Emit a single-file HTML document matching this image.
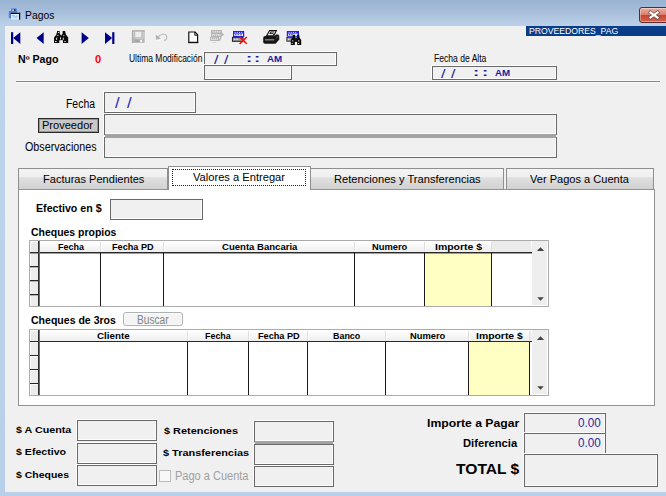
<!DOCTYPE html>
<html lang="es">
<head>
<meta charset="utf-8">
<title>Pagos</title>
<style>
html,body{margin:0;padding:0;}
body{width:666px;height:496px;overflow:hidden;position:relative;font-family:"Liberation Sans",sans-serif;background:#bfd4ed;}
#frame{position:absolute;left:0;top:0;width:666px;height:496px;background:linear-gradient(to bottom,#99b3d2 0px,#a3bbd8 9px,#b1c7e1 18px,#bdd1e9 26px,#bdd2eb 60px,#b9d0ea 496px);}
#client{position:absolute;left:5px;top:26px;width:661px;height:466px;background:#f0f0f0;}
.abs,.t,.box,.ln{position:absolute;}
.t{white-space:pre;line-height:1;transform-origin:0 0;display:block;}
.box{box-sizing:border-box;border:1px solid #696969;background:#f0f0f0;box-shadow:-1px -1px 0 #fdfdfd,inset -1px -1px 0 #fdfdfd;}
.ln{background:#858585;height:1px;}
.tab{position:absolute;box-sizing:border-box;border:1px solid #8e8f8f;border-bottom:none;background:linear-gradient(to bottom,#f4f4f4 0%,#efefef 38%,#dfdfdf 44%,#d2d2d2 100%);}
.tabsel{background:#fff;}
.grid{position:absolute;background:#fff;overflow:hidden;}
.gframe{position:absolute;left:0;top:0;right:0;bottom:0;box-sizing:border-box;border:1px solid #ababab;}
.gh{position:absolute;top:1px;height:11px;background:linear-gradient(to bottom,#ffffff,#f6f6f6 55%,#ededed);}
.vl{position:absolute;width:1px;background:#1a1a1a;}
.hl{position:absolute;height:2px;background:#3c3c3c;}
.sel{position:absolute;left:1px;width:9px;box-sizing:border-box;background:#ececec;border-top:1px solid #fdfdfd;border-left:1px solid #fdfdfd;}
.sb{position:absolute;top:1px;bottom:2px;width:15px;background:#eeeeee;}
</style>
</head>
<body>
<div id="frame"></div>
<div id="client"></div>

<!-- title icon -->
<svg class="abs" style="left:7px;top:7px" width="16" height="15" viewBox="7 7 16 15">
 <rect x="11.6" y="9" width="4.6" height="2.6" fill="#9cc0f0" stroke="#4a78d8" stroke-width="1"/>
 <rect x="8.8" y="11" width="8.6" height="7.2" rx=".8" fill="#4f7fdc"/>
 <rect x="14" y="9.3" width="1.6" height="1.5" fill="#101018"/>
 <rect x="11" y="13" width="9" height="6.6" fill="#d2ecf8"/>
 <rect x="10.8" y="12.8" width="9.4" height="1.2" fill="#0c0c10"/>
 <rect x="19" y="12.8" width="1.2" height="6.9" fill="#0c0c10"/>
 <rect x="12.4" y="15.2" width="2" height="1" fill="#7aa6e0"/>
 <rect x="13.4" y="16.6" width="3" height="1" fill="#8db4e6"/>
 <rect x="16.2" y="15.4" width="1.4" height="2" fill="#9cc0ea"/>
</svg>

<!-- close button -->
<div class="abs" style="left:639px;top:7px;width:40px;height:16px;box-sizing:border-box;border:1px solid #5c2a36;border-radius:3px;background:linear-gradient(to bottom,#eab0a2 0%,#dc8270 46%,#c6452e 52%,#d4664a 100%);box-shadow:inset 0 0 0 1px rgba(255,255,255,.35);"></div>
<svg class="abs" style="left:647px;top:9px" width="14" height="12" viewBox="0 0 14 12">
 <path d="M3.4 3.4 L10.6 8.6 M10.6 3.4 L3.4 8.6" stroke="#6a4a50" stroke-width="3.4" stroke-linecap="square"/>
 <path d="M3.4 3.4 L10.6 8.6 M10.6 3.4 L3.4 8.6" stroke="#fff" stroke-width="2.1" stroke-linecap="square"/>
</svg>

<!-- banner -->
<div class="abs" style="left:526px;top:26px;width:140px;height:10px;background:#0a3d87;"></div>

<!-- toolbar icons -->
<svg class="abs" style="left:5px;top:26px" width="310" height="24" viewBox="5 26 310 24">
 <g fill="#00008b">
  <rect x="11" y="32.2" width="2.2" height="11.8"/>
  <path d="M20.3 32.2 L20.3 44 L13.2 38.1 Z"/>
  <path d="M43.7 32.2 L43.7 44 L36.5 38.1 Z"/>
  <path d="M81.6 32.2 L81.6 44 L88.8 38.1 Z"/>
  <path d="M105 32.2 L105 44 L112.2 38.1 Z"/>
  <rect x="112.2" y="32.2" width="2.2" height="11.8"/>
 </g>
 <!-- binoculars -->
 <g fill="#0a0a0a">
  <path d="M57.2 31 H59.7 V33.6 L60.9 35.4 V40.2 H59.3 V43.1 H54 V37.6 L56.4 34.6 Z"/>
  <path d="M65.1 31 H62.6 V33.6 L61.4 35.4 V40.2 H63 V43.1 H68.2 V37.6 L65.9 34.6 Z"/>
  <rect x="60.4" y="35.6" width="1.6" height="4.4"/>
 </g>
 <g fill="#f4f4f4">
  <rect x="57.9" y="32" width="1" height="1"/>
  <rect x="57.3" y="35" width="1.1" height="1"/>
  <rect x="56.2" y="37.6" width="0.9" height="2.3"/>
  <rect x="55" y="41" width="1.6" height="0.9"/>
  <rect x="60" y="37.4" width="0.9" height="2"/>
  <rect x="62.8" y="37.6" width="0.9" height="2.3"/>
  <rect x="63.3" y="35" width="1" height="0.9"/>
  <rect x="64.2" y="41" width="1.6" height="0.8"/>
 </g>
 <!-- save (disabled) -->
 <g>
  <rect x="132.4" y="30.8" width="12" height="11.8" fill="#b9b9b9" stroke="#a2a2a2" stroke-width=".9"/>
  <rect x="135" y="31.6" width="6.6" height="5.8" fill="#ececec" stroke="#c4c4c4" stroke-width=".5"/>
  <g fill="#e2e2e2"><rect x="133" y="32.2" width="1.2" height="1"/><rect x="133" y="34.2" width="1.2" height="1"/><rect x="133" y="36.2" width="1.2" height="1"/><rect x="142.6" y="32.2" width="1.2" height="1"/><rect x="142.6" y="34.2" width="1.2" height="1"/><rect x="142.6" y="36.2" width="1.2" height="1"/>
  <rect x="135.6" y="38.2" width="1" height=".9"/><rect x="137.4" y="38.2" width="1" height=".9"/><rect x="139.2" y="38.2" width="1" height=".9"/><rect x="141.6" y="38" width="1.4" height="1.1"/></g>
  <rect x="134.4" y="39.6" width="7.8" height="3" fill="#a6a6a6"/>
  <rect x="140" y="39.8" width="2" height="2.4" fill="#f6f6f6"/>
  <path d="M145 31.4 V43.2 H133" fill="none" stroke="#fafafa" stroke-width=".8"/>
 </g>
 <!-- undo (disabled) -->
 <path d="M158 37.4 C160 34 164.6 32.8 166.4 35.6 C167.8 38 166 40.2 164 40.6" fill="none" stroke="#bababa" stroke-width="1.1"/>
 <path d="M155.8 34.6 L155.9 39.8 L160.8 38.8 Z" fill="#b4b4b4"/>
 <path d="M156.6 40.6 L161.4 39.6" stroke="#fbfbfb" stroke-width=".8"/>
 <!-- new doc -->
 <path d="M188.8 32 H195.2 L197.6 34.8 V42.3 H188.8 Z" fill="#fdfdfd" stroke="#111" stroke-width="1.2" stroke-linejoin="miter"/>
 <path d="M188.2 42.7 H198.3" stroke="#111" stroke-width="1"/>
 <path d="M194.8 32 V35.2 H197.6" fill="none" stroke="#111" stroke-width="1"/>
 <!-- edit (disabled) -->
 <g fill="#e4e4e4" stroke="#a8a8a8" stroke-width=".8">
  <rect x="211.6" y="30.6" width="9.8" height="2.6" fill="#c6c6c6"/>
  <rect x="211.6" y="33.6" width="8.6" height="3"/>
  <rect x="210.6" y="37.2" width="8" height="3.2"/>
 </g>
 <g fill="#9c9c9c"><rect x="213" y="34.7" width="1.2" height=".9"/><rect x="215" y="34.7" width="1.2" height=".9"/><rect x="217" y="34.7" width="1.2" height=".9"/><rect x="212" y="38.4" width="1.2" height=".9"/><rect x="214" y="38.4" width="1.2" height=".9"/><rect x="216" y="38.4" width="1.2" height=".9"/>
 <rect x="212.6" y="31.4" width="1" height=".8" fill="#eee"/><rect x="214.8" y="31.4" width="1" height=".8" fill="#eee"/><rect x="217" y="31.4" width="1" height=".8" fill="#eee"/><rect x="219.2" y="31.4" width="1" height=".8" fill="#eee"/>
 <rect x="212.4" y="42" width="1.4" height=".8" fill="#c0c0c0"/><rect x="214.6" y="42" width="1.4" height=".8" fill="#c0c0c0"/></g>
 <path d="M221.4 32.2 L224.2 34.4 L221.8 36.2 L220.8 39.4 L219 41.6 L218.4 41 L220 37.6 L220.8 34.4 Z" fill="#b6b6b6"/>
 <!-- delete -->
 <rect x="233" y="31" width="11.2" height="6" fill="#2222ee"/>
 <rect x="234.2" y="33.6" width="8.8" height="2.4" fill="#f0f0ff"/>
 <g fill="#e8e8ff"><rect x="234.6" y="32" width="1" height=".9"/><rect x="236.8" y="32" width="1" height=".9"/><rect x="239" y="32" width="1" height=".9"/><rect x="241.2" y="32" width="1" height=".9"/></g>
 <g fill="#333"><rect x="235" y="34.3" width="1.6" height="1"/><rect x="237.6" y="34.3" width="1.6" height="1"/><rect x="240.2" y="34.3" width="1.6" height="1"/></g>
 <rect x="232.4" y="37.3" width="10.6" height="4" fill="#9a9a9a" stroke="#111" stroke-width=".9"/>
 <g fill="#f0f0f0"><rect x="233.8" y="38.8" width="1.6" height="1"/><rect x="236.4" y="38.8" width="1.6" height="1"/></g>
 <path d="M239.3 36.8 L246.8 43.8 M246.8 37 L239.6 44" stroke="#f00" stroke-width="1.5"/>
 <!-- printer -->
 <path d="M266.6 35.8 L269.6 30.6 H276.4 L273.8 35.8 Z" fill="#fafafa" stroke="#111" stroke-width="1.1"/>
 <path d="M270.6 32 H274.2 M269.6 33.6 H273.4 M270.8 32 L269.8 33.6 M274 33.6 L273.2 35" stroke="#111" stroke-width=".9" fill="none"/>
 <path d="M263.2 38 Q263.2 36 265.2 36 H274.4 L276 34.4 H278 Q279.4 34.6 279.3 36.4 V39.6 L275.8 43.4 Q275.4 43.8 274.6 43.8 H265 Q263.2 43.8 263.2 42 Z" fill="#161616"/>
 <path d="M265 39.8 H274.2" stroke="#8c8c8c" stroke-width="1.3"/>
 <path d="M276 38.4 L278.6 36" stroke="#6a6a6a" stroke-width=".8"/>
 <!-- grid + binoculars -->
 <rect x="286.8" y="31" width="12.2" height="5.8" fill="#2222ee"/>
 <rect x="288" y="33.6" width="9.6" height="2.2" fill="#f0f0ff"/>
 <g fill="#e8e8ff"><rect x="288.6" y="32" width="1" height=".9"/><rect x="290.8" y="32" width="1" height=".9"/><rect x="293" y="32" width="1" height=".9"/><rect x="295.2" y="32" width="1" height=".9"/></g>
 <g fill="#333"><rect x="288.8" y="34.2" width="1.6" height="1"/><rect x="291.2" y="34.2" width="1.4" height="1"/></g>
 <rect x="286.8" y="37.4" width="5.4" height="3.8" fill="#9a9a9a" stroke="#222" stroke-width=".8"/>
 <rect x="288" y="38.8" width="1.4" height="1" fill="#eee"/>
 <g fill="#0a0a0a">
  <path d="M292.8 34.8 H295 V36.8 L295.8 38 V42 H294.8 V44.9 H290.8 V40 L292.4 37.6 Z"/>
  <path d="M299.2 34.8 H297 V36.8 L296.2 38 V42 H297.2 V44.9 H301.2 V40 L299.6 37.6 Z"/>
  <rect x="295.4" y="38.2" width="1.4" height="3.4"/>
 </g>
 <g fill="#f0f0f0"><rect x="292.4" y="40" width=".8" height="1.6"/><rect x="291.6" y="43" width="1.2" height=".8"/><rect x="298.4" y="40" width=".8" height="1.6"/><rect x="298" y="43" width="1.2" height=".8"/></g>
</svg>

<!-- header separator lines -->
<div class="ln" style="left:16px;top:81px;width:644px;"></div>
<div class="abs" style="left:16px;top:82px;width:644px;height:1px;background:#fafafa;"></div>
<div class="abs" style="left:16px;top:80px;width:644px;height:1px;background:#f9f9f9;"></div>

<!-- top text boxes -->
<div class="box" style="left:204px;top:52px;width:133px;height:14px;"></div>
<div class="box" style="left:204px;top:65px;width:88px;height:15px;"></div>
<div class="box" style="left:432px;top:66px;width:125px;height:14px;"></div>

<div class="box" style="left:104px;top:92px;width:92px;height:21px;"></div>
<div class="box" style="left:104px;top:114px;width:453px;height:21px;"></div>
<div class="box" style="left:104px;top:137px;width:453px;height:21px;"></div>

<div class="abs" style="left:105px;top:134px;width:451px;height:4px;background:#a3a3a3;"></div>

<!-- Proveedor button -->
<div class="abs" style="left:38px;top:118px;width:61px;height:15px;box-sizing:border-box;border:1px solid #2a2a2a;background:#c8c8c8;box-shadow:inset 0 0 0 1px rgba(60,60,60,.35);"></div>

<!-- tab control -->
<div class="abs" style="left:18px;top:189px;width:637px;height:217px;box-sizing:border-box;border:1px solid #929296;background:#fff;"></div>
<div class="tab" style="left:18px;top:168px;width:150px;height:21px;"></div>
<div class="tab" style="left:310px;top:168px;width:194px;height:21px;"></div>
<div class="tab" style="left:506px;top:168px;width:148px;height:21px;"></div>
<div class="tab tabsel" style="left:168px;top:166px;width:143px;height:24px;"></div>
<div class="abs" style="left:172px;top:169px;width:134px;height:17px;box-sizing:border-box;border:1px dotted #222;"></div>

<!-- Efectivo box -->
<div class="box" style="left:110px;top:199px;width:93px;height:21px;"></div>

<!-- grid 1 -->
<div class="grid" style="left:29px;top:240px;width:520px;height:67px;">
 <div class="gh" style="left:1px;width:502px;"></div>
 <div class="abs" style="left:1px;top:1px;width:9px;height:11px;background:#e9e9e9;border-left:1px solid #fff;border-top:1px solid #fff;box-sizing:border-box;"></div>
 <div class="abs" style="left:71px;top:2px;width:1px;height:9px;background:#dedede;"></div>
 <div class="abs" style="left:72px;top:2px;width:1px;height:9px;background:#fff;"></div>
 <div class="abs" style="left:134px;top:2px;width:1px;height:9px;background:#dedede;"></div>
 <div class="abs" style="left:135px;top:2px;width:1px;height:9px;background:#fff;"></div>
 <div class="abs" style="left:325px;top:2px;width:1px;height:9px;background:#dedede;"></div>
 <div class="abs" style="left:326px;top:2px;width:1px;height:9px;background:#fff;"></div>
 <div class="abs" style="left:395px;top:2px;width:1px;height:9px;background:#dedede;"></div>
 <div class="abs" style="left:396px;top:2px;width:1px;height:9px;background:#fff;"></div>
 <div class="abs" style="left:462px;top:2px;width:1px;height:9px;background:#dedede;"></div>
 <div class="abs" style="left:463px;top:2px;width:1px;height:9px;background:#fff;"></div>
 <div class="abs" style="left:463px;top:1px;width:39px;height:11px;background:#ebebeb;"></div>
 <div class="abs" style="left:396px;top:13px;width:66px;height:53px;background:#ffffc4;"></div>
 <div class="sel" style="top:13px;height:13px;"></div>
 <div class="sel" style="top:27px;height:13px;"></div>
 <div class="sel" style="top:41px;height:13px;"></div>
 <div class="sel" style="top:55px;height:11px;"></div>
 <div class="abs" style="left:1px;top:26px;width:9px;height:1px;background:#262626;"></div>
 <div class="abs" style="left:1px;top:27px;width:9px;height:1px;background:#b4b4b4;"></div>
 <div class="abs" style="left:1px;top:40px;width:9px;height:1px;background:#262626;"></div>
 <div class="abs" style="left:1px;top:41px;width:9px;height:1px;background:#b4b4b4;"></div>
 <div class="abs" style="left:1px;top:54px;width:9px;height:1px;background:#262626;"></div>
 <div class="abs" style="left:1px;top:55px;width:9px;height:1px;background:#b4b4b4;"></div>
 <div class="abs" style="left:1px;top:12px;width:502px;height:1px;background:#2a2a2a;"></div>
 <div class="abs" style="left:1px;top:13px;width:502px;height:1px;background:#9e9e9e;"></div>
 <div class="abs" style="left:9px;top:1px;width:1px;height:65px;background:#2e2e2e;"></div>
 <div class="abs" style="left:10px;top:1px;width:1px;height:65px;background:#6e6e6e;"></div>
 <div class="vl" style="left:71px;top:13px;height:53px;"></div>
 <div class="vl" style="left:134px;top:13px;height:53px;"></div>
 <div class="vl" style="left:325px;top:13px;height:53px;"></div>
 <div class="vl" style="left:395px;top:13px;height:53px;"></div>
 <div class="vl" style="left:462px;top:13px;height:53px;"></div>
 <div class="sb" style="left:503px;"></div>
 <svg class="abs" style="left:507px;top:6px" width="9" height="6"><path d="M0.8 5 L4.5 1.2 L8.2 5 Z" fill="#444"/></svg>
 <svg class="abs" style="left:507px;top:56px" width="9" height="6"><path d="M1.2 1.2 L4.5 4.8 L7.8 1.2 Z" fill="#444"/></svg>
 <div class="gframe"></div>
</div>

<!-- Buscar button -->
<div class="abs" style="left:123px;top:312px;width:60px;height:14px;box-sizing:border-box;border:1px solid #adb2b5;border-radius:3px;background:#f4f4f4;box-shadow:inset 0 0 0 1px #fcfcfc;"></div>

<!-- grid 2 -->
<div class="grid" style="left:29px;top:329px;width:520px;height:67px;">
 <div class="gh" style="left:1px;width:502px;"></div>
 <div class="abs" style="left:1px;top:1px;width:9px;height:11px;background:#e9e9e9;border-left:1px solid #fff;border-top:1px solid #fff;box-sizing:border-box;"></div>
 <div class="abs" style="left:158px;top:2px;width:1px;height:9px;background:#dedede;"></div>
 <div class="abs" style="left:159px;top:2px;width:1px;height:9px;background:#fff;"></div>
 <div class="abs" style="left:219px;top:2px;width:1px;height:9px;background:#dedede;"></div>
 <div class="abs" style="left:220px;top:2px;width:1px;height:9px;background:#fff;"></div>
 <div class="abs" style="left:278px;top:2px;width:1px;height:9px;background:#dedede;"></div>
 <div class="abs" style="left:279px;top:2px;width:1px;height:9px;background:#fff;"></div>
 <div class="abs" style="left:356px;top:2px;width:1px;height:9px;background:#dedede;"></div>
 <div class="abs" style="left:357px;top:2px;width:1px;height:9px;background:#fff;"></div>
 <div class="abs" style="left:439px;top:2px;width:1px;height:9px;background:#dedede;"></div>
 <div class="abs" style="left:440px;top:2px;width:1px;height:9px;background:#fff;"></div>
 <div class="abs" style="left:500px;top:2px;width:1px;height:9px;background:#dedede;"></div>
 <div class="abs" style="left:501px;top:2px;width:1px;height:9px;background:#fff;"></div>
 <div class="abs" style="left:501px;top:1px;width:1px;height:11px;background:#ebebeb;"></div>
 <div class="abs" style="left:440px;top:13px;width:60px;height:53px;background:#ffffc4;"></div>
 <div class="sel" style="top:13px;height:13px;"></div>
 <div class="sel" style="top:27px;height:13px;"></div>
 <div class="sel" style="top:41px;height:13px;"></div>
 <div class="sel" style="top:55px;height:11px;"></div>
 <div class="abs" style="left:1px;top:26px;width:9px;height:1px;background:#262626;"></div>
 <div class="abs" style="left:1px;top:40px;width:9px;height:1px;background:#262626;"></div>
 <div class="abs" style="left:1px;top:54px;width:9px;height:1px;background:#262626;"></div>
 <div class="abs" style="left:1px;top:12px;width:502px;height:1px;background:#2a2a2a;"></div>
 <div class="abs" style="left:9px;top:1px;width:1px;height:65px;background:#2e2e2e;"></div>
 <div class="abs" style="left:10px;top:1px;width:1px;height:65px;background:#6e6e6e;"></div>
 <div class="vl" style="left:158px;top:13px;height:53px;"></div>
 <div class="vl" style="left:219px;top:13px;height:53px;"></div>
 <div class="vl" style="left:278px;top:13px;height:53px;"></div>
 <div class="vl" style="left:356px;top:13px;height:53px;"></div>
 <div class="vl" style="left:439px;top:13px;height:53px;"></div>
 <div class="vl" style="left:500px;top:13px;height:53px;"></div>
 <div class="sb" style="left:503px;"></div>
 <svg class="abs" style="left:507px;top:6px" width="9" height="6"><path d="M0.8 5 L4.5 1.2 L8.2 5 Z" fill="#444"/></svg>
 <svg class="abs" style="left:507px;top:56px" width="9" height="6"><path d="M1.2 1.2 L4.5 4.8 L7.8 1.2 Z" fill="#444"/></svg>
 <div class="gframe"></div>
</div>

<!-- bottom boxes -->
<div class="box" style="left:77px;top:420px;width:80px;height:21px;"></div>
<div class="box" style="left:77px;top:443px;width:80px;height:21px;"></div>
<div class="box" style="left:77px;top:465px;width:80px;height:21px;"></div>
<div class="box" style="left:254px;top:421px;width:80px;height:21px;"></div>
<div class="box" style="left:254px;top:444px;width:80px;height:21px;"></div>
<div class="abs" style="left:255px;top:441px;width:78px;height:3px;background:#a3a3a3;"></div>
<div class="box" style="left:254px;top:466px;width:80px;height:21px;"></div>
<div class="box" style="left:524px;top:413px;width:82px;height:21px;"></div>
<div class="box" style="left:524px;top:433px;width:82px;height:22px;"></div>
<div class="box" style="left:524px;top:454px;width:134px;height:33px;"></div>

<!-- checkbox -->
<div class="abs" style="left:159px;top:470px;width:12px;height:12px;box-sizing:border-box;border:1px solid #bcbcbc;background:#f8f8f8;"></div>

<span class="t" style="left:25.0px;top:9.00px;font-size:11.6px;font-weight:normal;color:#000;transform:scaleX(0.8913);">Pagos</span>
<span class="t" style="left:17.5px;top:55.00px;font-size:10px;font-weight:bold;color:#000;transform:scaleX(1.0627);">Nº Pago</span>
<span class="t" style="left:95.1px;top:55.00px;font-size:10px;font-weight:bold;color:#f00;transform:scaleX(1.1146);">0</span>
<span class="t" style="left:128.7px;top:54.00px;font-size:10.2px;font-weight:normal;color:#000;transform:scaleX(0.8310);">Ultima Modificación</span>
<span class="t" style="left:433.6px;top:54.00px;font-size:10.2px;font-weight:normal;color:#000;transform:scaleX(0.8409);">Fecha de Alta</span>
<span class="t" style="left:528.8px;top:27.00px;font-size:9.2px;font-weight:normal;color:#fff;transform:scaleX(0.9410);">PROVEEDORES_PAG</span>
<span class="t" style="left:213.7px;top:54.00px;font-size:12px;font-weight:normal;color:#1a1a9e;transform:scaleX(1.3458);">/</span>
<span class="t" style="left:224.0px;top:54.00px;font-size:12px;font-weight:normal;color:#1a1a9e;transform:scaleX(1.3159);">/</span>
<span class="t" style="left:246.0px;top:54.00px;font-size:10px;font-weight:bold;color:#1a1a9e;transform:scaleX(1.8542);">:</span>
<span class="t" style="left:254.4px;top:54.00px;font-size:10px;font-weight:bold;color:#1a1a9e;transform:scaleX(1.8542);">:</span>
<span class="t" style="left:267.2px;top:54.00px;font-size:9.4px;font-weight:bold;color:#1a1a9e;transform:scaleX(1.0415);">AM</span>
<span class="t" style="left:441.0px;top:68.00px;font-size:12px;font-weight:normal;color:#1a1a9e;transform:scaleX(1.3458);">/</span>
<span class="t" style="left:451.3px;top:68.00px;font-size:12px;font-weight:normal;color:#1a1a9e;transform:scaleX(1.3159);">/</span>
<span class="t" style="left:473.3px;top:68.00px;font-size:10px;font-weight:bold;color:#1a1a9e;transform:scaleX(1.8542);">:</span>
<span class="t" style="left:481.7px;top:68.00px;font-size:10px;font-weight:bold;color:#1a1a9e;transform:scaleX(1.8542);">:</span>
<span class="t" style="left:494.5px;top:68.00px;font-size:9.4px;font-weight:bold;color:#1a1a9e;transform:scaleX(1.0415);">AM</span>
<span class="t" style="left:66.0px;top:98.00px;font-size:12px;font-weight:normal;color:#000;transform:scaleX(0.8693);">Fecha</span>
<span class="t" style="left:114.7px;top:95.00px;font-size:15.4px;font-weight:normal;color:#1c1cc0;transform:scaleX(1.0745);">/</span>
<span class="t" style="left:126.7px;top:95.00px;font-size:15.4px;font-weight:normal;color:#1c1cc0;transform:scaleX(1.0745);">/</span>
<span class="t" style="left:42.0px;top:120.00px;font-size:11.4px;font-weight:normal;color:#000;transform:scaleX(0.9703);">Proveedor</span>
<span class="t" style="left:25.4px;top:141.00px;font-size:12px;font-weight:normal;color:#000;transform:scaleX(0.8945);">Observaciones</span>
<span class="t" style="left:42.6px;top:174.00px;font-size:11.3px;font-weight:normal;color:#000;transform:scaleX(0.9785);">Facturas Pendientes</span>
<span class="t" style="left:193.0px;top:172.00px;font-size:11.3px;font-weight:normal;color:#000;transform:scaleX(0.9854);">Valores a Entregar</span>
<span class="t" style="left:333.7px;top:174.00px;font-size:11.3px;font-weight:normal;color:#000;transform:scaleX(0.9857);">Retenciones y Transferencias</span>
<span class="t" style="left:530.0px;top:174.00px;font-size:11.3px;font-weight:normal;color:#000;transform:scaleX(0.9790);">Ver Pagos a Cuenta</span>
<span class="t" style="left:36.3px;top:204.00px;font-size:10px;font-weight:bold;color:#000;transform:scaleX(1.0632);">Efectivo en $</span>
<span class="t" style="left:30.7px;top:228.00px;font-size:10.3px;font-weight:bold;color:#000;transform:scaleX(1.0153);">Cheques propios</span>
<span class="t" style="left:30.9px;top:316.00px;font-size:10.3px;font-weight:bold;color:#000;transform:scaleX(1.0231);">Cheques de 3ros</span>
<span class="t" style="left:137.0px;top:314.00px;font-size:12px;font-weight:normal;color:#838383;transform:scaleX(0.8458);">Buscar</span>
<span class="t" style="left:57.6px;top:243.00px;font-size:8.7px;font-weight:bold;color:#000;transform:scaleX(1.0315);">Fecha</span>
<span class="t" style="left:112.0px;top:243.00px;font-size:8.7px;font-weight:bold;color:#000;transform:scaleX(1.0507);">Fecha PD</span>
<span class="t" style="left:221.6px;top:243.00px;font-size:8.7px;font-weight:bold;color:#000;transform:scaleX(1.0997);">Cuenta Bancaria</span>
<span class="t" style="left:371.7px;top:243.00px;font-size:8.7px;font-weight:bold;color:#000;transform:scaleX(1.0753);">Numero</span>
<span class="t" style="left:435.0px;top:243.00px;font-size:8.7px;font-weight:bold;color:#000;transform:scaleX(1.2018);">Importe $</span>
<span class="t" style="left:97.0px;top:332.00px;font-size:8.7px;font-weight:bold;color:#000;transform:scaleX(1.1254);">Cliente</span>
<span class="t" style="left:205.3px;top:332.00px;font-size:8.7px;font-weight:bold;color:#000;transform:scaleX(1.0235);">Fecha</span>
<span class="t" style="left:257.6px;top:332.00px;font-size:8.7px;font-weight:bold;color:#000;transform:scaleX(1.0532);">Fecha PD</span>
<span class="t" style="left:332.7px;top:332.00px;font-size:8.7px;font-weight:bold;color:#000;transform:scaleX(1.0278);">Banco</span>
<span class="t" style="left:409.5px;top:332.00px;font-size:8.7px;font-weight:bold;color:#000;transform:scaleX(1.0723);">Numero</span>
<span class="t" style="left:475.8px;top:332.00px;font-size:8.7px;font-weight:bold;color:#000;transform:scaleX(1.1966);">Importe $</span>
<span class="t" style="left:16.0px;top:425.00px;font-size:9.9px;font-weight:bold;color:#000;transform:scaleX(1.0873);">$ A Cuenta</span>
<span class="t" style="left:16.0px;top:447.00px;font-size:9.9px;font-weight:bold;color:#000;transform:scaleX(1.0717);">$ Efectivo</span>
<span class="t" style="left:16.0px;top:470.00px;font-size:9.9px;font-weight:bold;color:#000;transform:scaleX(1.0610);">$ Cheques</span>
<span class="t" style="left:164.0px;top:426.00px;font-size:9.9px;font-weight:bold;color:#000;transform:scaleX(1.1050);">$ Retenciones</span>
<span class="t" style="left:163.4px;top:448.00px;font-size:9.9px;font-weight:bold;color:#000;transform:scaleX(1.1045);">$ Transferencias</span>
<span class="t" style="left:175.0px;top:470.00px;font-size:12px;font-weight:normal;color:#a0a0a0;transform:scaleX(0.9180);">Pago a Cuenta</span>
<span class="t" style="left:427.4px;top:418.00px;font-size:10.9px;font-weight:bold;color:#000;transform:scaleX(1.1211);">Importe a Pagar</span>
<span class="t" style="left:463.3px;top:438.00px;font-size:10.9px;font-weight:bold;color:#000;transform:scaleX(1.0290);">Diferencia</span>
<span class="t" style="left:456.4px;top:462.00px;font-size:14.8px;font-weight:bold;color:#000;transform:scaleX(1.0545);">TOTAL $</span>
<span class="t" style="left:577.6px;top:417.00px;font-size:12.2px;font-weight:normal;color:#2a2aa0;transform:scaleX(0.9606);">0.00</span>
<span class="t" style="left:577.6px;top:437.00px;font-size:12.2px;font-weight:normal;color:#2a2aa0;transform:scaleX(0.9606);">0.00</span>
</body>
</html>
